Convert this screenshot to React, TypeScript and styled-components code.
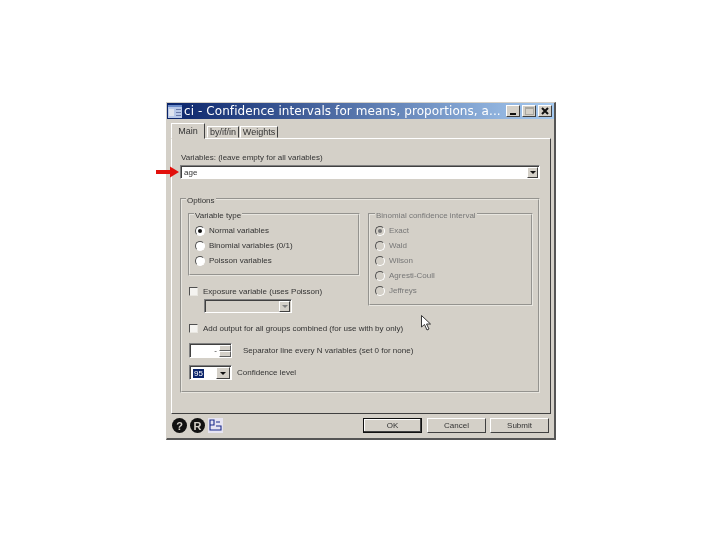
import React from "react";
import styled, { createGlobalStyle } from "styled-components";

const Global = createGlobalStyle`
  html, body {
    margin: 0;
    padding: 0;
    background: #fff;
  }
  * {
    box-sizing: border-box;
  }
`;

const Slide = styled.div`
  position: relative;
  width: 720px;
  height: 540px;
  padding: 102px 0 0 166px;
  overflow: hidden;
  background: #fff;
`;

const Window = styled.div`
  width: 390px;
  height: 338px;
  display: flex;
  flex-direction: column;
  background: #d4d0c8;
  border: 1px solid #d4d0c8;
  border-right: 2px solid #555;
  border-bottom: 2px solid #555;
  font-family: "Liberation Sans", Arial, sans-serif;
  font-size: 8px;
  color: #333;
  filter: blur(0.4px);
`;

const TitleBar = styled.div`
  height: 16px;
  flex: none;
  display: flex;
  align-items: center;
  padding: 0 2px 0 1px;
  background: linear-gradient(90deg, #0a246a 0%, #a6caf0 100%);
`;

const AppIcon = styled.svg`
  width: 14px;
  height: 13px;
  flex: none;
`;

const TitleText = styled.div`
  flex: 1;
  min-width: 0;
  margin-left: 2px;
  font-family: "DejaVu Sans", Verdana, sans-serif;
  font-size: 12px;
  letter-spacing: 0.08px;
  line-height: 16px;
  color: #fff;
  white-space: nowrap;
  overflow: hidden;
`;

const TitleButton = styled.div`
  width: 14px;
  height: 12px;
  margin-left: 2px;
  flex: none;
  display: flex;
  align-items: center;
  justify-content: center;
  background: #d4d0c8;
  border: 1px solid;
  border-color: #fff #404040 #404040 #fff;
`;

const TabStrip = styled.div`
  height: 19px;
  flex: none;
  display: flex;
  align-items: flex-end;
  padding: 0 0 0 4px;
  position: relative;
  z-index: 1;
`;

const Tab = styled.div<{ $active?: boolean; $w: number }>`
  width: ${(p) => p.$w}px;
  height: ${(p) => (p.$active ? 16 : 12)}px;
  margin-right: ${(p) => (p.$active ? 2 : 1)}px;
  margin-bottom: ${(p) => (p.$active ? -1 : 0)}px;
  padding-bottom: ${(p) => (p.$active ? 1 : 1)}px;
  font-size: 9px;
  background: #d4d0c8;
  border: 1px solid;
  border-color: #fff #404040 #d4d0c8 #fff;
  display: flex;
  align-items: center;
  justify-content: center;
`;

const Panel = styled.div`
  height: 276px;
  width: 380px;
  margin-left: 4px;
  flex: none;
  padding: 13px 9px 0;
  border: 1px solid;
  border-color: #fff #404040 #404040 #fff;
`;

const FieldLabel = styled.div`
  height: 11px;
  line-height: 11px;
  white-space: nowrap;
`;

const Combo = styled.div<{ $w: number; $h?: number; $off?: boolean }>`
  width: ${(p) => p.$w}px;
  height: ${(p) => p.$h ?? 14}px;
  display: flex;
  align-items: center;
  background: ${(p) => (p.$off ? "#d4d0c8" : "#fff")};
  border: 1px solid;
  border-color: #808080 #fff #fff #808080;
  box-shadow: inset 1px 1px 0 #404040;
  padding: 1px 1px 0 3px;
`;

const MainCombo = styled(Combo)`
  margin: 2px 0 0 -1px;
`;

const ComboValue = styled.div`
  flex: 1;
  line-height: 11px;
`;

const Selected = styled.span`
  background: #0a246a;
  color: #fff;
  padding: 0 1px;
`;

const ArrowBtn = styled.div<{ $off?: boolean; $w?: number }>`
  width: ${(p) => p.$w ?? 11}px;
  align-self: stretch;
  flex: none;
  display: flex;
  align-items: center;
  justify-content: center;
  background: #d4d0c8;
  border: 1px solid;
  border-color: #fff #404040 #404040 #fff;
  &::after {
    content: "";
    border-left: 3px solid transparent;
    border-right: 3px solid transparent;
    border-top: 3px solid ${(p) => (p.$off ? "#808080" : "#111")};
  }
`;

const Group = styled.fieldset<{ $w: number; $h: number }>`
  width: ${(p) => p.$w}px;
  height: ${(p) => p.$h}px;
  flex: none;
  margin: 0;
  padding: 0;
  border: 2px groove #e8e6e0;
  min-width: 0;
`;

const OptionsGroup = styled(Group)`
  margin: 16px 0 0 -1px;
  padding: 8px 0 0 5px;
`;

/* height below the line box keeps the border above the text's middle, as in the original */
const Legend = styled.legend<{ $off?: boolean; $ml?: number }>`
  margin-left: ${(p) => p.$ml ?? 4}px;
  padding: 0 1px;
  height: 7px;
  line-height: 11px;
  font-size: 8px;
  background: #d4d0c8;
  color: ${(p) => (p.$off ? "#777" : "#333")};
`;

const Columns = styled.div`
  display: flex;
  gap: 8px;
  margin-left: 1px;
`;

const RadioList = styled.div`
  display: flex;
  flex-direction: column;
  gap: 4px;
  padding: 8px 0 0 5px;
`;

const RadioRow = styled.div<{ $off?: boolean }>`
  height: 11px;
  display: flex;
  align-items: center;
  gap: 4px;
  color: ${(p) => (p.$off ? "#777" : "#333")};
  white-space: nowrap;
`;

const Radio = styled.span<{ $on?: boolean; $off?: boolean }>`
  width: 10px;
  height: 10px;
  flex: none;
  border-radius: 50%;
  display: flex;
  align-items: center;
  justify-content: center;
  background: ${(p) => (p.$off ? "#d4d0c8" : "#fff")};
  border: 1px solid;
  border-color: #505050 #fff #fff #505050;
  &::after {
    content: "";
    width: 4px;
    height: 4px;
    border-radius: 50%;
    background: ${(p) => (p.$on ? (p.$off ? "#777" : "#111") : "transparent")};
  }
`;

const CheckRow = styled.div<{ $mt: number; $ml?: number }>`
  height: 11px;
  margin: ${(p) => p.$mt}px 0 0 ${(p) => p.$ml ?? 2}px;
  display: flex;
  align-items: center;
  gap: 5px;
  white-space: nowrap;
`;

const Check = styled.span`
  width: 9px;
  height: 9px;
  flex: none;
  background: #f4f3f0;
  border: 1px solid;
  border-color: #505050 #e8e6e0 #e8e6e0 #505050;
`;

const Indented = styled.div`
  margin: 2px 0 0 16px;
`;

const NumberRow = styled.div<{ $mt: number; $gap: number }>`
  display: flex;
  align-items: center;
  gap: ${(p) => p.$gap}px;
  margin: ${(p) => p.$mt}px 0 0 2px;
  white-space: nowrap;
`;

const SpinBox = styled.div`
  width: 43px;
  height: 15px;
  display: flex;
  background: #fff;
  border: 1px solid;
  border-color: #808080 #fff #fff #808080;
  box-shadow: inset 1px 1px 0 #404040;
  padding: 1px 0 0 1px;
`;

const SpinDash = styled.div`
  flex: 1;
  text-align: right;
  padding-right: 2px;
  line-height: 11px;
`;

const SpinArrows = styled.div`
  width: 12px;
  display: flex;
  flex-direction: column;
`;

const SpinPart = styled.div`
  flex: 1;
  background: #d4d0c8;
  border: 1px solid;
  border-color: #fff #606060 #606060 #fff;
`;

const Footer = styled.div`
  display: flex;
  align-items: flex-start;
  padding: 4px 5px 0 5px;
`;

const IconBtn = styled.div`
  width: 15px;
  height: 15px;
  margin-right: 3px;
  flex: none;
`;

const Spacer = styled.div`
  flex: 1;
`;

const PushButton = styled.div<{ $default?: boolean; $ml?: number }>`
  width: 59px;
  height: 15px;
  margin-left: ${(p) => p.$ml ?? 0}px;
  display: flex;
  align-items: center;
  justify-content: center;
  border: 1px solid;
  border-color: ${(p) => (p.$default ? "#111" : "#fff #404040 #404040 #fff")};
  box-shadow: ${(p) => (p.$default ? "inset -1px -1px 0 #404040, inset 1px 1px 0 #fff" : "none")};
`;

const RedArrow = styled.svg`
  position: absolute;
  left: 156px;
  top: 166px;
  width: 24px;
  height: 12px;
`;

const Pointer = styled.svg`
  position: absolute;
  left: 421px;
  top: 315px;
  width: 11px;
  height: 16px;
`;

const RoundIcon = ({ ch }: { ch: string }) => (
  <svg width="15" height="15" viewBox="0 0 15 15">
    <circle cx="7.5" cy="7.5" r="7.5" fill="#111" />
    <text x="7.5" y="11.5" textAnchor="middle" fontSize="11" fontWeight="700" fontFamily="Liberation Sans" fill="#d4d0c8">
      {ch}
    </text>
  </svg>
);

export default function App() {
  return (
    <Slide>
      <Global />
      <Window>
        <TitleBar>
          <AppIcon viewBox="0 0 14 13">
            <rect width="14" height="13" fill="#b8c8e8" />
            <rect width="14" height="2" fill="#6a8ac8" />
            <rect x="1" y="4" width="5" height="7" fill="#dfe4ee" />
            <rect x="8" y="4" width="5" height="1" fill="#6a7aa8" />
            <rect x="8" y="7" width="5" height="1" fill="#6a7aa8" />
            <rect x="8" y="10" width="5" height="1" fill="#6a7aa8" />
          </AppIcon>
          <TitleText>ci - Confidence intervals for means, proportions, a...</TitleText>
          <TitleButton>
            <svg width="8" height="8" viewBox="0 0 8 8">
              <rect x="1" y="6" width="6" height="2" fill="#111" />
            </svg>
          </TitleButton>
          <TitleButton>
            <svg width="9" height="8" viewBox="0 0 9 8">
              <rect x="0.5" y="0.5" width="8" height="7" fill="none" stroke="#a8a69f" />
              <rect width="9" height="2" fill="#a8a69f" />
            </svg>
          </TitleButton>
          <TitleButton>
            <svg width="8" height="8" viewBox="0 0 8 8">
              <path d="M1 1 L7 7 M7 1 L1 7" stroke="#111" strokeWidth="2" />
            </svg>
          </TitleButton>
        </TitleBar>

        <TabStrip>
          <Tab $active $w={34}>Main</Tab>
          <Tab $w={32}>by/if/in</Tab>
          <Tab $w={38}>Weights</Tab>
        </TabStrip>

        <Panel>
          <FieldLabel>Variables: (leave empty for all variables)</FieldLabel>
          <MainCombo $w={360}>
            <ComboValue>age</ComboValue>
            <ArrowBtn />
          </MainCombo>

          <OptionsGroup $w={360} $h={198}>
            <Legend $ml={-1}>Options</Legend>
            <Columns>
              <div>
                <Group $w={172} $h={66}>
                  <Legend>Variable type</Legend>
                  <RadioList>
                    <RadioRow><Radio $on />Normal variables</RadioRow>
                    <RadioRow><Radio />Binomial variables (0/1)</RadioRow>
                    <RadioRow><Radio />Poisson variables</RadioRow>
                  </RadioList>
                </Group>
                <CheckRow $mt={10} $ml={1}>
                  <Check />
                  Exposure variable (uses Poisson)
                </CheckRow>
                <Indented>
                  <Combo $w={88} $off>
                    <ComboValue />
                    <ArrowBtn $off />
                  </Combo>
                </Indented>
              </div>
              <Group $w={165} $h={96}>
                <Legend $off $ml={5}>Binomial confidence interval</Legend>
                <RadioList>
                  <RadioRow $off><Radio $on $off />Exact</RadioRow>
                  <RadioRow $off><Radio $off />Wald</RadioRow>
                  <RadioRow $off><Radio $off />Wilson</RadioRow>
                  <RadioRow $off><Radio $off />Agresti-Coull</RadioRow>
                  <RadioRow $off><Radio $off />Jeffreys</RadioRow>
                </RadioList>
              </Group>
            </Columns>
            <CheckRow $mt={10}>
              <Check />
              Add output for all groups combined (for use with by only)
            </CheckRow>
            <NumberRow $mt={9} $gap={11}>
              <SpinBox>
                <SpinDash>-</SpinDash>
                <SpinArrows>
                  <SpinPart />
                  <SpinPart />
                </SpinArrows>
              </SpinBox>
              Separator line every N variables (set 0 for none)
            </NumberRow>
            <NumberRow $mt={7} $gap={5}>
              <Combo $w={43} $h={15}>
                <ComboValue><Selected>95</Selected></ComboValue>
                <ArrowBtn $w={14} />
              </Combo>
              Confidence level
            </NumberRow>
          </OptionsGroup>
        </Panel>

        <Footer>
          <IconBtn><RoundIcon ch="?" /></IconBtn>
          <IconBtn><RoundIcon ch="R" /></IconBtn>
          <IconBtn>
            <svg width="15" height="15" viewBox="0 0 15 15">
              <rect width="15" height="15" fill="#e6e4f2" />
              <path d="M2 2 H6 V7 H2 Z M2 7 V12 H13 V8 H8 M8 4 H12" fill="none" stroke="#1a2a8a" strokeWidth="1.1" />
            </svg>
          </IconBtn>
          <Spacer />
          <PushButton $default>OK</PushButton>
          <PushButton $ml={5}>Cancel</PushButton>
          <PushButton $ml={4}>Submit</PushButton>
        </Footer>
      </Window>

      <RedArrow viewBox="0 0 24 12">
        <path d="M0 4 H14 V0.5 L23 6 L14 11.5 V8 H0 Z" fill="#e2100c" />
      </RedArrow>

      <Pointer viewBox="0 0 11 16">
        <path d="M0.5 0.5 V12 L3.5 9.5 L6 15 L8 14 L5.5 9 H9.5 Z" fill="#fff" stroke="#222" strokeWidth="0.9" />
      </Pointer>
    </Slide>
  );
}
